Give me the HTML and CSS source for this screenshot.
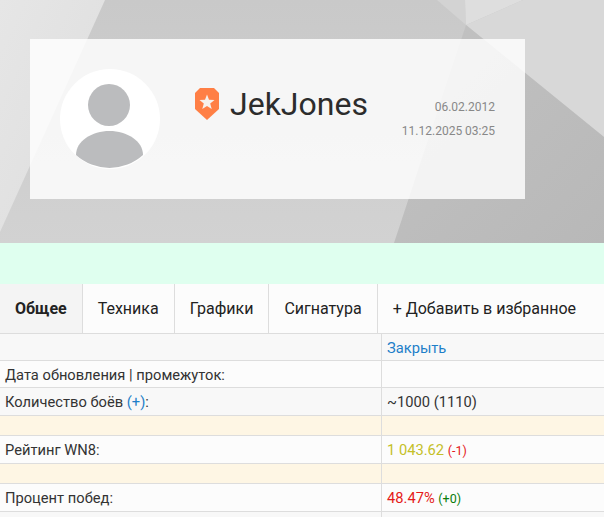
FILE: index.html
```html
<!DOCTYPE html>
<html lang="ru">
<head>
    <meta charset="UTF-8">
    <meta name="viewport" content="width=device-width, initial-scale=1.0">
    <title>JekJones</title>
    <link rel="stylesheet" href="styles.css">
</head>
<body>
    <div class="header">
        <svg class="header-bg" viewBox="0 0 604 243" preserveAspectRatio="none">
            <defs>
                <linearGradient id="mid" x1="0" y1="0" x2="0" y2="1">
                    <stop offset="0" stop-color="#c9c9c9"/>
                    <stop offset="1" stop-color="#d2d2d2"/>
                </linearGradient>
                <linearGradient id="dark" x1="0" y1="0" x2="1" y2="1">
                    <stop offset="0" stop-color="#c2c2c2"/>
                    <stop offset="1" stop-color="#b8b8b8"/>
                </linearGradient>
                <linearGradient id="light" x1="0" y1="0" x2="1" y2="1">
                    <stop offset="0" stop-color="#e6e6e6"/>
                    <stop offset="1" stop-color="#dddddd"/>
                </linearGradient>
            </defs>
            <rect width="604" height="243" fill="url(#mid)"/>
            <polygon points="0,0 105,0 0,232" fill="url(#light)"/>
            <polygon points="437,0 465,0 466,25" fill="#d3d3d3"/>
            <polygon points="465,0 523,0 466,25" fill="#dedede"/>
            <polygon points="523,0 604,0 604,137 466,25" fill="#d8d8d8"/>
            <polygon points="466,25 604,137 604,243 394,243" fill="url(#dark)"/>
        </svg>
        <div class="profile">
            <div class="avatar">
                <svg viewBox="0 0 100 100" width="100" height="100">
                    <circle cx="50" cy="50" r="50" fill="#fff"/>
                    <ellipse cx="49" cy="36" rx="21" ry="21" fill="#bbbcbe"/>
                    <path d="M16 86 C16 72 32 62 49.500 62 C67 62 83 72 83 86 A50 50 0 0 1 16 86 Z" fill="#bbbcbe"/>
                </svg>
            </div>
            <div class="name-box">
                <svg class="badge" viewBox="0 0 24 32" width="24" height="32">
                    <path d="M5 0 H19 L24 5 V21 L12 32 L0 21 V5 Z" fill="#ff7f45"/>
                    <path d="M12 6.500 L14 11.800 L19.500 12 L15.200 15.500 L16.700 21 L12 17.900 L7.300 21 L8.800 15.500 L4.500 12 L10 11.800 Z" fill="#f6f1ec"/>
                </svg>
                <span class="name">JekJones</span>
            </div>
            <div class="dates">
                <div>06.02.2012</div>
                <div>11.12.2025 03:25</div>
            </div>
        </div>
    </div>

    <div class="notice"></div>

    <div class="tabs">
        <div class="tab active">Общее</div>
        <div class="tab">Техника</div>
        <div class="tab">Графики</div>
        <div class="tab">Сигнатура</div>
        <div class="tab tab-fav">+ Добавить в избранное</div>
    </div>

    <table class="stats">
        <tr class="h27 alt">
            <td></td>
            <td><a href="#">Закрыть</a></td>
        </tr>
        <tr class="h27">
            <td>Дата обновления | промежуток:</td>
            <td></td>
        </tr>
        <tr class="h28 alt">
            <td>Количество боёв <a href="#">(+)</a>:</td>
            <td>~1000 (1110)</td>
        </tr>
        <tr class="gap">
            <td></td>
            <td></td>
        </tr>
        <tr class="h28">
            <td>Рейтинг WN8:</td>
            <td><span class="yellow">1 043.62</span> <small class="red">(-1)</small></td>
        </tr>
        <tr class="gap">
            <td></td>
            <td></td>
        </tr>
        <tr class="h28">
            <td>Процент побед:</td>
            <td><span class="red">48.47%</span> <small class="green">(+0)</small></td>
        </tr>
        <tr class="h28 alt">
            <td></td>
            <td></td>
        </tr>
    </table>
</body>
</html>
```
FILE: styles.css
```css
html, body {
    margin: 0;
    height: 517px;
    overflow: hidden;
}
body {
    font-family: 'Roboto', sans-serif;
    font-size: 16px;
    color: #333;
    background: #fff;
}
.header {
    position: relative;
    height: 243px;
    padding: 39px 79px 0 30px;
    box-sizing: border-box;
}
.header-bg {
    position: absolute;
    top: 0;
    left: 0;
    width: 100%;
    height: 100%;
}
.profile {
    position: relative;
    display: flex;
    height: 160px;
    padding: 30px;
    box-sizing: border-box;
    background: rgba(255, 255, 255, 0.82);
}
.avatar {
    width: 100px;
    height: 100px;
}
.name-box {
    display: flex;
    align-items: center;
    align-self: flex-start;
    margin: 17px 0 0 35px;
}
.badge {
    margin-right: 11px;
}
.name {
    font-size: 32px;
    line-height: 36px;
    color: #2c2c2c;
}
.dates {
    margin-left: auto;
    padding-top: 26px;
    text-align: right;
    font-size: 12px;
    color: #888;
    line-height: 24px;
}
.notice {
    height: 41px;
    background: #dfffef;
}
.tabs {
    display: flex;
    height: 50px;
    box-sizing: border-box;
    border-bottom: 1px solid #ddd;
    background: #fcfcfc;
}
.tab {
    display: flex;
    align-items: center;
    padding: 0 15px;
    border-right: 1px solid #ddd;
    color: #222;
}
.tab.active {
    font-weight: bold;
    background: #f4f4f4;
}
.tab-fav {
    border-right: none;
}
.stats {
    width: 604px;
    table-layout: fixed;
    border-collapse: separate;
    border-spacing: 0;
    font-size: 14.700px;
    background: #fcfcfc;
}
.stats td {
    box-sizing: border-box;
    padding: 0 5px;
    border-bottom: 1px solid #ddd;
}
.stats td:first-child {
    width: 382px;
    border-right: 1px solid #ddd;
}
.stats a {
    color: #1e7fc9;
    text-decoration: none;
}
.stats small {
    font-size: 12.500px;
}
.h27 {
    height: 27px;
}
.h27 td {
    padding-top: 2px;
}
.h28 {
    height: 28px;
}
.alt {
    background: #f8f8f8;
}
.gap {
    height: 20px;
    background: #fef6e4;
}
.yellow {
    color: #c4c028;
}
.red {
    color: #e51a1a;
}
.green {
    color: #0a7d0a;
}
```
